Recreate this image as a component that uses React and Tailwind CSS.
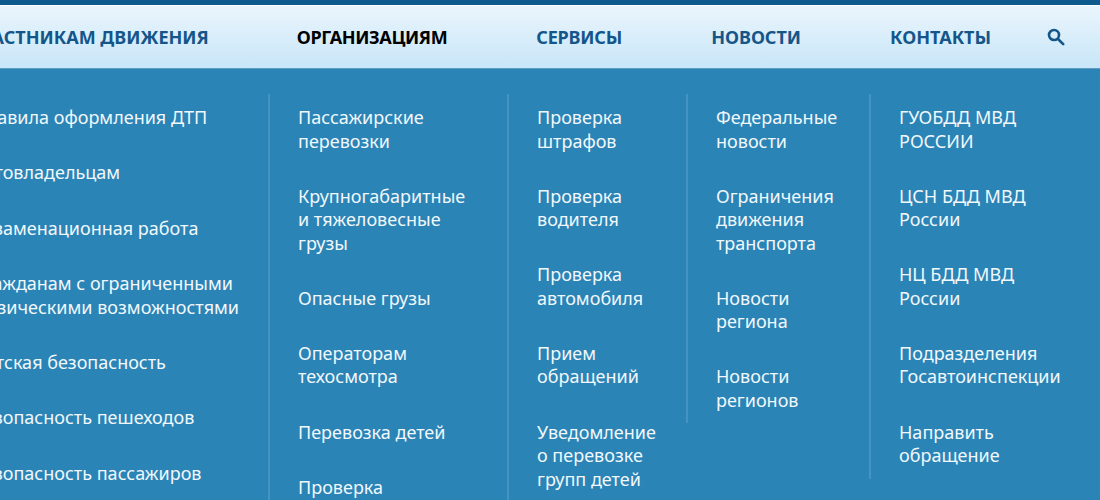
import React from "react";

const columns = [
  { w: "w-[239px]", items: ["Пассажирские\nперевозки", "Крупногабаритные\nи тяжеловесные\nгрузы", "Опасные грузы", "Операторам\nтехосмотра", "Перевозка детей", "Проверка\nперевозчика"] },
  { w: "w-[179px]", items: ["Проверка\nштрафов", "Проверка\nводителя", "Проверка\nавтомобиля", "Прием\nобращений", "Уведомление\nо перевозке\nгрупп детей"] },
  { w: "w-[183px]", items: ["Федеральные\nновости", "Ограничения\nдвижения\nтранспорта", "Новости\nрегиона", "Новости\nрегионов"] },
  { w: "w-[230px]", items: ["ГУОБДД МВД\nРОССИИ", "ЦСН БДД МВД\nРоссии", "НЦ БДД МВД\nРоссии", "Подразделения\nГосавтоинспекции", "Направить\nобращение"] },
];

const first = ["Правила оформления ДТП", "Автовладельцам", "Экзаменационная работа", "Гражданам с ограниченными\nфизическими возможностями", "Детская безопасность", "Безопасность пешеходов", "Безопасность пассажиров", "Безопасность водителей"];

function List({ items, gap }) {
  return (
    <ul className={`flex flex-col ${gap}`}>
      {items.map((t) => (
        <li key={t} className="whitespace-pre-line">{t}</li>
      ))}
    </ul>
  );
}

export default function App() {
  return (
    <div className="h-[500px] w-[1100px] overflow-hidden bg-[#2b84b6] font-['Noto_Sans',sans-serif]">
      <div className="h-[5px] bg-[#0f5a8c]" />
      <div className="h-px bg-white" />
      <nav className="flex h-[63px] items-center gap-[89px] whitespace-nowrap border-b border-[#5f9cc0] bg-gradient-to-b from-[#eaf5fc] to-[#c8e6f8] text-[18px] font-bold uppercase leading-none text-[#15568a]">
        <span className="ml-[-33px] mr-[-1px]">Участникам движения</span>
        <span className="tracking-[-0.4px] text-black">Организациям</span>
        <span className="tracking-[-0.2px]">Сервисы</span>
        <span>Новости</span>
        <span>Контакты</span>
        <svg className="ml-[-33px] h-[18px] w-[18px]" viewBox="0 0 18 18" fill="none" stroke="#15568a" strokeWidth="2.6" strokeLinecap="round">
          <circle cx="7" cy="7" r="5" />
          <path d="M11 11l5.2 5.2" />
        </svg>
      </nav>
      <div className="mt-[25px] flex items-start text-[18px] font-[450] leading-[23.5px] text-[#f1f8fc]">
        <div className="ml-[-27px] w-[295px] shrink-0 pt-3 whitespace-nowrap">
          <List items={first} gap="gap-[31.9px]" />
        </div>
        {columns.map((c) => (
          <div key={c.w} className={`${c.w} shrink-0 border-l-2 border-[#4593c2] pb-[11px] pl-[28px] pt-3`}>
            <List items={c.items} gap="gap-[31.65px]" />
          </div>
        ))}
      </div>
    </div>
  );
}
